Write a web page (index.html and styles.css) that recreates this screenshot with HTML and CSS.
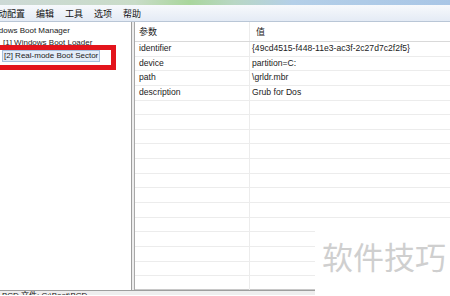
FILE: index.html
```html
<!DOCTYPE html>
<html lang="zh-CN">
<head>
    <meta charset="UTF-8">
    <title>BOOTICE - BCD</title>
    <link rel="stylesheet" href="styles.css">
</head>
<body>

    <div class="titlebar"></div>

    <div class="menubar">
        <span class="menu-item">启动配置</span>
        <span class="menu-item">编辑</span>
        <span class="menu-item">工具</span>
        <span class="menu-item">选项</span>
        <span class="menu-item">帮助</span>
    </div>

    <div class="main">
        <div class="tree">
            <div class="tree-root">Windows Boot Manager</div>
            <div class="tree-child">[1] Windows Boot Loader</div>
            <div class="tree-child"><span class="selected">[2] Real-mode Boot Sector</span></div>
        </div>

        <div class="splitter"></div>

        <div class="grid">
            <div class="grid-head">
                <div class="col-name">参数</div>
                <div class="col-value head-value">值</div>
            </div>
            <div class="grid-row"><div class="col-name">identifier</div><div class="col-value">{49cd4515-f448-11e3-ac3f-2c27d7c2f2f5}</div></div>
            <div class="grid-row"><div class="col-name">device</div><div class="col-value">partition=C:</div></div>
            <div class="grid-row"><div class="col-name">path</div><div class="col-value">\grldr.mbr</div></div>
            <div class="grid-row"><div class="col-name">description</div><div class="col-value">Grub for Dos</div></div>
            <div class="grid-row"><div class="col-name"></div><div class="col-value"></div></div>
            <div class="grid-row"><div class="col-name"></div><div class="col-value"></div></div>
            <div class="grid-row"><div class="col-name"></div><div class="col-value"></div></div>
            <div class="grid-row"><div class="col-name"></div><div class="col-value"></div></div>
            <div class="grid-row"><div class="col-name"></div><div class="col-value"></div></div>
            <div class="grid-row"><div class="col-name"></div><div class="col-value"></div></div>
            <div class="grid-row"><div class="col-name"></div><div class="col-value"></div></div>
            <div class="grid-row"><div class="col-name"></div><div class="col-value"></div></div>
            <div class="grid-row"><div class="col-name"></div><div class="col-value"></div></div>
            <div class="grid-row"><div class="col-name"></div><div class="col-value"></div></div>
            <div class="grid-row"><div class="col-name"></div><div class="col-value"></div></div>
            <div class="grid-row"><div class="col-name"></div><div class="col-value"></div></div>
            <div class="grid-row"><div class="col-name"></div><div class="col-value"></div></div>
        </div>
    </div>

    <div class="statusbar">BCD 文件: C:\Boot\BCD</div>

    <!-- red annotation frame round the selected entry -->
    <div class="mark"></div>

    <div class="watermark">软件技巧</div>

</body>
</html>
```

FILE: styles.css
```css
body {
    margin: 0;
    width: 450px;
    height: 296px;
    overflow: hidden;
    position: relative;
    background: #ffffff;
    font-family: "Liberation Sans", "Noto Sans CJK SC", sans-serif;
    font-size: 8.6px;
    color: #222;
}
.titlebar {
    height: 5px;
    background: linear-gradient(to right, #cdd9d6 0%, #c9dcc8 30%, #a9d69c 42%, #b9d7c4 52%, #b4cfe8 65%, #a9c6e6 100%);
}
.menubar {
    height: 16px;
    display: flex;
    align-items: center;
    margin-left: -11px;
    background: linear-gradient(to bottom, #f7f9fc, #e4ebf5);
    border-bottom: 1px solid #b9c6d6;
    font-family: "Noto Sans CJK SC", sans-serif;
    font-size: 9px;
    color: #111;
}
.menu-item {
    padding: 0 5.5px;
}
.menu-item:first-child {
    padding-left: 0;
}
.main {
    display: flex;
    height: 268px;
}
.tree {
    width: 131px;
    flex: none;
    padding-top: 3px;
    overflow: hidden;
    background: #fff;
    font-size: 8px;
}
.tree-root {
    height: 12px;
    line-height: 12px;
    margin-left: -15px;
    white-space: nowrap;
}
.tree-child {
    height: 12.5px;
    line-height: 12.5px;
    padding-left: 3px;
    white-space: nowrap;
}
.selected {
    display: inline-block;
    line-height: 10px;
    padding: 0 1px;
    margin-left: -1px;
    background: #e3edf9;
    border: 1px solid #a6c0de;
}
.splitter {
    width: 2px;
    flex: none;
    border-left: 1px solid #9e9e9e;
    border-right: 1px solid #a8a8a8;
    background: #ececec;
}
.grid {
    flex: 1;
    overflow: hidden;
}
.grid-head {
    display: flex;
    height: 19px;
    line-height: 19px;
    border-bottom: 1px solid #d9d9d9;
    font-family: "Noto Sans CJK SC", sans-serif;
    font-size: 9px;
}
.grid-row {
    display: flex;
    height: 13.65px;
    line-height: 13.65px;
    border-bottom: 1px solid #ececec;
}
.col-name {
    width: 110px;
    flex: none;
    padding-left: 4px;
    border-right: 1px solid #ececec;
}
.col-value {
    flex: 1;
    padding-left: 2px;
    white-space: nowrap;
}
.head-value {
    padding-left: 6px;
}
.statusbar {
    height: 4px;
    border-top: 1px solid #9e9e9e;
    box-shadow: 0 -1px 0 #c8c8c8;
    background: #eeeeee;
    padding-left: 2px;
    line-height: 9px;
    font-size: 8px;
    color: #111;
    overflow: hidden;
    white-space: nowrap;
}
.mark {
    position: absolute;
    left: -6px;
    top: 45px;
    width: 112px;
    height: 15px;
    border: 5px solid #e3141c;
}
.watermark {
    position: absolute;
    left: 315px;
    top: 226px;
    width: 135px;
    height: 70px;
    background: #ffffff;
    padding-top: 12px;
    padding-left: 7px;
    box-sizing: border-box;
    font-family: "Noto Sans CJK SC", sans-serif;
    font-size: 31px;
    line-height: 36px;
    color: #cfcfcf;
    white-space: nowrap;
}
```
